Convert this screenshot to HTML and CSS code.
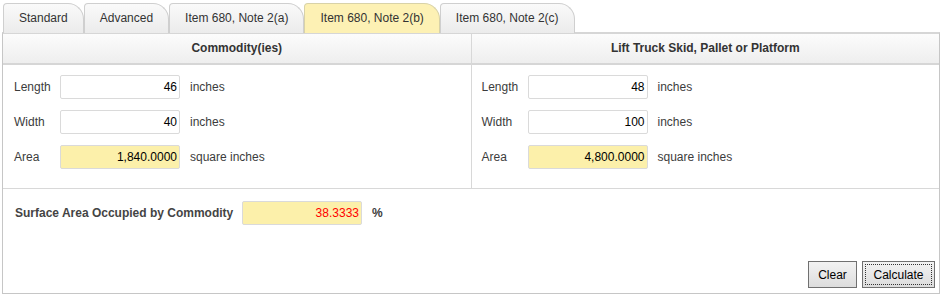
FILE: index.html
```html
<!DOCTYPE html>
<html lang="en">

<head>
    <meta charset="UTF-8">
    <meta name="viewport" content="width=device-width, initial-scale=1.0">
    <title>Density Calculator</title>
    <link rel="stylesheet" href="styles.css">
</head>

<body>
    <div class="calc">
        <ul class="tabs">
            <li><a href="">Standard</a></li>
            <li><a href="">Advanced</a></li>
            <li><a href="">Item 680, Note 2(a)</a></li>
            <li class="on"><a href="">Item 680, Note 2(b)</a></li>
            <li><a href="">Item 680, Note 2(c)</a></li>
        </ul>

        <div class="panel">
            <div class="cols">
                <section class="col">
                    <h2>Commodity(ies)</h2>
                    <div class="rows">
                        <div class="row">
                            <label>Length</label>
                            <input type="text" value="46">
                            <span>inches</span>
                        </div>
                        <div class="row">
                            <label>Width</label>
                            <input type="text" value="40">
                            <span>inches</span>
                        </div>
                        <div class="row">
                            <label>Area</label>
                            <input type="text" class="out" value="1,840.0000">
                            <span>square inches</span>
                        </div>
                    </div>
                </section>
                <section class="col">
                    <h2>Lift Truck Skid, Pallet or Platform</h2>
                    <div class="rows">
                        <div class="row">
                            <label>Length</label>
                            <input type="text" value="48">
                            <span>inches</span>
                        </div>
                        <div class="row">
                            <label>Width</label>
                            <input type="text" value="100">
                            <span>inches</span>
                        </div>
                        <div class="row">
                            <label>Area</label>
                            <input type="text" class="out" value="4,800.0000">
                            <span>square inches</span>
                        </div>
                    </div>
                </section>
            </div>

            <div class="result">
                <div class="row">
                    <label>Surface Area Occupied by Commodity</label>
                    <input type="text" class="out red" value="38.3333">
                    <span>%</span>
                </div>
                <div class="btns">
                    <button class="clear">Clear</button>
                    <button class="calc-btn">Calculate</button>
                </div>
            </div>
        </div>
    </div>
</body>

</html>
```

FILE: styles.css
```css
* {
    margin: 0;
    padding: 0;
    box-sizing: border-box;
}

body {
    background: #fff;
    font-family: "Liberation Sans", Arial, sans-serif;
    font-size: 12px;
    color: #333;
}

.calc {
    width: 938px;
    margin: 3px 0 0 2px;
}

/* 탭 */
.tabs {
    display: flex;
    gap: 0;
    padding-left: 1px;
    list-style: none;
    height: 29px;
}

.tabs li {
    height: 30px;
    border: 1px solid #cfcfcf;
    border-bottom: none;
    border-radius: 4px 16px 0 0;
    background: linear-gradient(#fafafa, #ebebeb);
}

.tabs li.on {
    background: #fdf1b4;
    border-color: #d8d2a8;
    position: relative;
}

.tabs a {
    display: block;
    padding: 0 15px;
    line-height: 28px;
    color: #333;
    text-decoration: none;
}

/* 본문 */
.panel {
    border: 1px solid #c6c6c6;
    border-top: 2px solid #d6d6d6;
    height: 262px;
    display: flex;
    flex-direction: column;
}

.cols {
    display: flex;
    border-bottom: 1px solid #d8d8d8;
}

.col {
    flex: 1;
}

.col+.col {
    border-left: 1px solid #d8d8d8;
}

.col h2 {
    height: 31px;
    line-height: 29px;
    text-align: center;
    font-size: 12px;
    color: #333;
    background: linear-gradient(#fcfcfc, #eeeeee);
    border-bottom: 2px solid #d6d6d6;
}

.rows {
    display: flex;
    flex-direction: column;
    gap: 11px;
    padding: 10px 0 19px 11px;
}

.col+.col .rows {
    padding-left: 10px;
}

.row {
    display: flex;
    align-items: center;
}

.row label {
    width: 46px;
    color: #3c3c3c;
}

.row input {
    width: 120px;
    height: 24px;
    border: 1px solid #dadada;
    border-radius: 2px;
    padding: 0 2px;
    text-align: right;
    font: 12px "Liberation Sans", Arial, sans-serif;
    color: #000;
    background: #fff;
}

.row input.out {
    background: #fcf0aa;
}

.row input.red {
    color: #f00;
}

.row span {
    margin-left: 10px;
    color: #3c3c3c;
}

/* 결과 */
.result {
    flex: 1;
    display: flex;
    flex-direction: column;
    padding: 12px 4px 5px 12px;
}

.result label {
    width: 227px;
    font-weight: bold;
    color: #444;
}

.result .row span {
    font-weight: bold;
}

.btns {
    margin-top: auto;
    display: flex;
    justify-content: flex-end;
    gap: 5px;
}

.btns button {
    height: 27px;
    padding: 0;
    border: 1px solid #707070;
    background: linear-gradient(#f2f2f2, #dddddd);
    font: 12px "Liberation Sans", Arial, sans-serif;
    color: #000;
}

.btns .clear {
    width: 49px;
}

/* 포커스된 버튼 점선 */
.btns .calc-btn {
    width: 73px;
    outline: 1px dotted #333;
    outline-offset: -4px;
}
```
